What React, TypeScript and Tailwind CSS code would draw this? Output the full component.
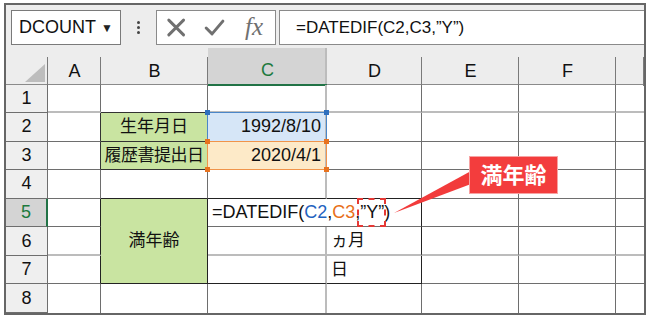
import { twMerge } from 'tailwind-merge';
import type { ReactNode } from 'react';

const cols = ['A', 'B', 'C', 'D', 'E', 'F', ''];

function Cell({ className, children }: { className?: string; children?: ReactNode }) {
  return (
    <div
      className={twMerge(
        'relative flex items-center border-r border-b border-r-[#6e6e6e] border-b-[#6e6e6e] text-[18px] text-[#111] min-w-0',
        className,
      )}
    >
      {children}
    </div>
  );
}

function Handle({ className }: { className: string }) {
  return <span className={twMerge('absolute z-10 h-[5px] w-[5px]', className)} />;
}

export default function App() {
  const light = 'border-b-2 border-b-[#bcbcbc]';
  const cRight = 'border-r-2 border-r-[#bcbcbc]';

  const rowHeader = (n: number) => (
    <Cell
      key={`h${n}`}
      className={
        n === 5
          ? 'justify-center bg-[#d4d4d4] text-[#1d7a3e] border-r-2 border-r-[#217346]'
          : 'justify-center bg-[#efefef]'
      }
    >
      {n}
    </Cell>
  );

  return (
    <div className="relative h-[318px] w-[650px] bg-white font-['Liberation_Sans','Noto_Sans_CJK_JP',sans-serif]">
      <div className="absolute left-[4px] top-[3px] w-[642px] border-2 border-[#666] bg-[#ededed]">
        {/* toolbar */}
        <div className="flex h-[43px] items-start pt-[5px] pl-[5px]">
          <div className="flex h-[35px] w-[110px] items-center justify-between border border-[#7a7a7a] bg-white pl-[7px] pr-[7px]">
            <span className="text-[18px] text-[#111]">DCOUNT</span>
            <span className="text-[12px] text-[#222]">▼</span>
          </div>
          <div className="flex h-[35px] w-[35px] flex-col items-center justify-center gap-[2px]">
            <span className="h-[3px] w-[3px] rounded-full bg-[#444]" />
            <span className="h-[3px] w-[3px] rounded-full bg-[#444]" />
            <span className="h-[3px] w-[3px] rounded-full bg-[#444]" />
          </div>
          <div className="relative flex h-[35px] w-[120px] items-center border border-[#8a8a8a] bg-white">
            <svg width="120" height="33" viewBox="0 0 120 33">
              <path d="M12 9 L27 24 M27 9 L12 24" stroke="#707070" strokeWidth="3" strokeLinecap="round" fill="none" />
              <path d="M50 17 L56 23 L67 10" stroke="#707070" strokeWidth="3" strokeLinecap="round" strokeLinejoin="round" fill="none" />
            </svg>
            <span className="absolute left-[88px] top-[1px] font-['Liberation_Serif',serif] text-[25px] italic leading-[30px] text-[#707070]">fx</span>
          </div>
          <div className="ml-[3px] flex h-[35px] flex-1 items-center border border-[#8a8a8a] border-r-0 bg-white pl-[16px] text-[17px] text-[#111]">
            =DATEDIF(C2,C3,”Y”)
          </div>
        </div>

        {/* column headers */}
        <div className="grid h-[36.5px] grid-cols-[42px_53px_107px_119px_95px_97px_97px_28px] border-b border-b-[#8a8a8a]">
          <div className="relative after:absolute after:right-0 after:top-[9px] after:bottom-0 after:w-px after:bg-[#7a7a7a] after:content-['']">
            <svg className="absolute left-[19px] top-[16px]" width="20" height="18" viewBox="0 0 20 18">
              <polygon points="0,18 20,18 20,0" fill="#bdbdbd" />
            </svg>
          </div>
          {cols.map((c) => (
            <div
              key={c || 'g'}
              className={
                c === 'C'
                  ? "relative flex items-center justify-center bg-[#d4d4d4] pt-[9px] text-[18px] text-[#1d7a3e] border-b-2 border-b-[#217346] after:absolute after:right-0 after:top-0 after:bottom-0 after:w-[2px] after:bg-[#bcbcbc] after:content-['']"
                  : "relative flex items-center justify-center pt-[9px] text-[18px] text-[#111] after:absolute after:right-0 after:top-[9px] after:bottom-0 after:w-px after:bg-[#7a7a7a] after:content-['']"
              }
            >
              {c}
            </div>
          ))}
        </div>

        {/* grid */}
        <div className="grid grid-cols-[42px_53px_107px_119px_95px_97px_97px_28px] grid-rows-[repeat(8,28.56px)] bg-white">
          {/* row 1 */}
          {rowHeader(1)}
          <Cell className={light} />
          <Cell className={twMerge(light, 'border-b-[#333] border-b')} />
          <Cell className={twMerge(light, cRight)} />
          <Cell className={light} />
          <Cell className={light} />
          <Cell className={light} />
          <Cell className={twMerge(light, 'border-r-0')} />

          {/* row 2 */}
          {rowHeader(2)}
          <Cell className="border-r-[#333]" />
          <Cell className="justify-center bg-[#c9e4a1] border-r-[#333] border-b-[#333] text-[17px]">生年月日</Cell>
          <Cell className={twMerge(cRight, 'justify-end bg-[#d6e6f7] pr-[4px]')}>
            <span className="pointer-events-none absolute -left-px -top-px -right-[2px] -bottom-px border-[1.5px] border-[#4a86c8]" />
            <Handle className="-left-[3px] -top-[3px] bg-[#2f6fbd]" />
            <Handle className="-right-[4px] -top-[3px] bg-[#2f6fbd]" />
            1992/8/10
          </Cell>
          <Cell />
          <Cell />
          <Cell />
          <Cell className="border-r-0" />

          {/* row 3 */}
          {rowHeader(3)}
          <Cell className="border-r-[#333]" />
          <Cell className="justify-center bg-[#c9e4a1] border-r-[#333] border-b-[#333] text-[17px] tracking-[-0.5px]">履歴書提出日</Cell>
          <Cell className={twMerge(cRight, 'justify-end bg-[#fdeac8] pr-[4px]')}>
            <span className="pointer-events-none absolute -left-px -top-px -right-[2px] -bottom-px border-[1.5px] border-[#f0944a]" />
            <Handle className="-left-[3px] -top-[3px] bg-[#e8731f]" />
            <Handle className="-right-[4px] -top-[3px] bg-[#e8731f]" />
            <Handle className="-left-[3px] -bottom-[3px] bg-[#e8731f]" />
            <Handle className="-right-[4px] -bottom-[3px] bg-[#e8731f]" />
            2020/4/1
          </Cell>
          <Cell />
          <Cell />
          <Cell />
          <Cell className="border-r-0" />

          {/* row 4 */}
          {rowHeader(4)}
          <Cell />
          <Cell className="border-b-[#222]" />
          <Cell className={twMerge(cRight, 'border-b-[#222]')} />
          <Cell className="border-b-[#222]" />
          <Cell />
          <Cell />
          <Cell className="border-r-0" />

          {/* row 5 */}
          {rowHeader(5)}
          <Cell className="border-r-[#222]" />
          <Cell className="row-span-3 justify-center bg-[#c9e4a1] border-r-[#222] border-b-[#222] text-[17px]">満年齢</Cell>
          <Cell className="col-span-2 border-r-[#222] pl-[4px] whitespace-nowrap">
            =DATEDIF(<span className="text-[#1f63c0]">C2</span>,<span className="text-[#e8701a]">C3</span>,
            <span className="relative inline-block">
              ”Y”
              <span className="absolute -left-[3px] -right-[2px] -top-[1px] -bottom-[1px] border-2 border-dashed border-[#e53935]" />
            </span>
            )
          </Cell>
          <Cell />
          <Cell />
          <Cell className="border-r-0" />

          {/* row 6 */}
          {rowHeader(6)}
          <Cell className={twMerge(light, 'border-r-[#222]')} />
          <Cell className={twMerge(light, cRight)} />
          <Cell className={twMerge(light, 'border-r-[#222] pl-[4px] text-[17px]')}>ヵ月</Cell>
          <Cell className={light} />
          <Cell className={light} />
          <Cell className={twMerge(light, 'border-r-0')} />

          {/* row 7 */}
          {rowHeader(7)}
          <Cell className="border-r-[#222]" />
          <Cell className={twMerge(cRight, 'border-b-[#222]')} />
          <Cell className="border-r-[#222] border-b-[#222] pl-[4px] text-[17px]">日</Cell>
          <Cell />
          <Cell />
          <Cell className="border-r-0" />

          {/* row 8 */}
          {rowHeader(8)}
          <Cell className="border-b-0" />
          <Cell className="border-b-0" />
          <Cell className={twMerge(cRight, 'border-b-0')} />
          <Cell className="border-b-0" />
          <Cell className="border-b-0" />
          <Cell className="border-b-0" />
          <Cell className="border-b-0 border-r-0" />
        </div>
      </div>

      {/* callout */}
      <svg className="pointer-events-none absolute left-0 top-0" width="650" height="318">
        <polygon points="471,171 471,184 394,213" fill="#f23b3b" />
      </svg>
      <div className="absolute left-[469px] top-[156px] flex h-[38px] w-[89px] items-center justify-center border border-[#f7a3a3] bg-[#f33d3d] text-[22px] font-bold text-white">
        満年齢
      </div>
    </div>
  );
}
